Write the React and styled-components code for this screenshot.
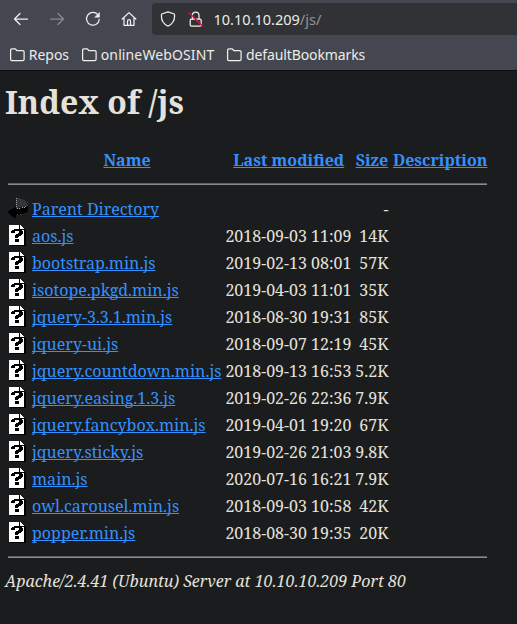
import React from "react";
import styled, { createGlobalStyle } from "styled-components";

const GlobalStyle = createGlobalStyle`
  body { margin: 0; background: #1b1c1d; overflow: hidden; }
`;

const Window = styled.div`
  height: 624px;
  box-sizing: border-box;
  overflow: hidden;
  background: #1b1c1d;
  color: #e5e2dc;
`;

const Chrome = styled.header`
  height: 70px;
  box-sizing: border-box;
  background: #44474f;
  box-shadow: 0 1px 0 #0f0f11;
  font-family: "Noto Sans", sans-serif;
  color: #ecece8;
`;

const Toolbar = styled.div`
  display: flex;
  height: 35px;
  padding-top: 3px;
  box-sizing: border-box;
`;

const NavButtons = styled.nav`
  display: flex;
  align-items: center;
  gap: 20px;
  width: 152px;
  padding-left: 13px;
  box-sizing: border-box;
  flex: none;
`;

const Icon = styled.svg`
  display: block;
  flex: none;
  width: 16px;
  height: 16px;
  fill: none;
  stroke: ${(p) => (p.$dim ? "#888a8e" : "#efefec")};
  stroke-width: 1.25;
  stroke-linecap: round;
  stroke-linejoin: round;
`;

const AddressBar = styled.div`
  display: flex;
  align-items: center;
  flex: 1;
  padding-left: 8px;
  border-radius: 4px 0 0 4px;
  background: #313236;
`;

const SecurityIcons = styled.div`
  display: flex;
  gap: 12px;
  margin-right: 9.5px;
`;

const Url = styled.span`
  font-size: 14.5px;
  line-height: 20px;
  white-space: nowrap;
`;

const UrlPath = styled.span`
  color: #929397;
`;

const Bookmarks = styled.div`
  display: flex;
  align-items: center;
  gap: 12px;
  height: 35px;
  padding: 4px 0 0 9px;
  box-sizing: border-box;
`;

const Bookmark = styled.span`
  display: flex;
  align-items: center;
  gap: 3.7px;
  font-size: 14px;
  line-height: 20px;
  letter-spacing: ${(p) => p.$tracking}px;
`;

const Listing = styled.main`
  padding: 10px 5px 0;
  font: 16px/22px "Noto Serif", serif;
`;

const Title = styled.h1`
  margin: 0 0 25px;
  font-size: 32px;
  line-height: 44px;
  font-weight: 700;
`;

const Table = styled.div`
  width: 479px;
  margin-left: 3px;
`;

const Row = styled.div`
  display: grid;
  grid-template-columns: 20px 190px 125.4px 33px 95px;
  column-gap: 4px;
  height: ${(p) => (p.$head ? 22 : 27)}px;
  font-weight: ${(p) => (p.$head ? 700 : 400)};
  white-space: nowrap;
`;

const Cell = styled.div`
  display: flex;
  justify-content: ${(p) => p.$align || "flex-start"};
`;

const Link = styled.span`
  color: #3391ff;
  text-decoration: underline;
  text-decoration-skip-ink: none;
`;

const Rule = styled.hr`
  height: 2px;
  margin: ${(p) => p.$margin};
  border: 0;
  box-sizing: border-box;
  border-top: 1px solid #5d5f61;
  background: #8a8a88;
`;

const FileGlyph = styled.svg`
  display: block;
  width: 20px;
  height: 22px;
  margin-top: -1px;
`;

const Footer = styled.address`
  font-style: italic;
`;

const BackIcon = () => (
  <Icon viewBox="0 0 16 16"><path d="M14.5 8H1.5M7 2.5 1.5 8 7 13.5" /></Icon>
);
const ForwardIcon = () => (
  <Icon viewBox="0 0 16 16" $dim><path d="M1.5 8h13M9 2.5 14.5 8 9 13.5" /></Icon>
);
const ReloadIcon = () => (
  <Icon viewBox="0 0 16 16">
    <path d="M12.8 3.6A6.4 6.4 0 1 0 14.3 8.5" />
    <path d="M14.4 1.8v4.4H10z" fill="#efefec" strokeWidth=".6" />
  </Icon>
);
const HomeIcon = () => (
  <Icon viewBox="0 0 16 16">
    <path d="M1.2 8 8 1.6 14.8 8M3 6.8v7.5h10V6.8M6.5 14V10.2a1.5 1.5 0 0 1 3 0V14" />
  </Icon>
);
const ShieldIcon = () => (
  <Icon viewBox="0 0 16 16">
    <path d="M8 .9 14.4 3c.8 5.5-1 9.7-6.4 12.2C2.600 12.700.8 8.500 1.600 3z" />
  </Icon>
);
const LockIcon = () => (
  <Icon viewBox="0 0 16 16">
    <rect x="2.200" y="8" width="11" height="7" rx="1.300" />
    <path d="M4.400 7.800V4.300a3.300 3.300 0 0 1 6.600 0v3.500" />
    <path d="M1.200 1.800 14.500 15" stroke="#e80b43" strokeWidth="1.400" />
  </Icon>
);
const FolderIcon = () => (
  <Icon viewBox="0 0 16 16">
    <path d="M1.600 3.100q0-1.300 1.300-1.300h3.400l1.500 1.700h6q1.300 0 1.300 1.200v7.500q0 1.300-1.300 1.300H2.900q-1.300 0-1.300-1.300z" />
  </Icon>
);

const UnknownFile = () => (
  <FileGlyph viewBox="0 0 20 22" shapeRendering="crispEdges">
    <path fill="#000" d="M2 2h11l5 5v15H2z" />
    <path fill="#fff" d="M1 1h10v5h5v15H1zM12 1h1v1h1v1h1v1h1v1h-4z" />
    <path
      fill="#000"
      d="M6 5h7v1h1v1h1v3h-1v1h-1v1h-2v1h-1v1H7v-3h1v-1h2V9h1V7H7v2H3V7h1V6h2zM7 15h4v3H7z"
    />
  </FileGlyph>
);

const ParentFolder = () => (
  <FileGlyph viewBox="0 0 20 22" shapeRendering="crispEdges">
    <path fill="#343536" d="M8 1h4v1h3v1h2v1h1v2h1v3h-3v1h-5v1H8z" />
    <path fill="#000" d="M0 14h1v-1h2v-1h2v-1h2v-1h1v2h5v-1h4V9h3v6h-2v1h-2v1h-3v1H8v3H6v-1H4v-1H3v-1H2v-1H1v-1H0z" />
    <path stroke="#9b9b9b" fill="none" strokeDasharray="1 1" d="M8.500 1v9M9 11.500h4M14 10.500h3M17 9.500h2" />
    <path stroke="#4c4c4c" fill="none" strokeDasharray="1 2" d="M19.500 5v5M9 17.500h5" />
  </FileGlyph>
);

const bookmarks = [
  { name: "Repos", tracking: 0 },
  { name: "onlineWebOSINT", tracking: 0.12 },
  { name: "defaultBookmarks", tracking: -0.12 },
];

const files = [
  ["aos.js", "2018-09-03 11:09", "14K"],
  ["bootstrap.min.js", "2019-02-13 08:01", "57K"],
  ["isotope.pkgd.min.js", "2019-04-03 11:01", "35K"],
  ["jquery-3.3.1.min.js", "2018-08-30 19:31", "85K"],
  ["jquery-ui.js", "2018-09-07 12:19", "45K"],
  ["jquery.countdown.min.js", "2018-09-13 16:53", "5.2K"],
  ["jquery.easing.1.3.js", "2019-02-26 22:36", "7.9K"],
  ["jquery.fancybox.min.js", "2019-04-01 19:20", "67K"],
  ["jquery.sticky.js", "2019-02-26 21:03", "9.8K"],
  ["main.js", "2020-07-16 16:21", "7.9K"],
  ["owl.carousel.min.js", "2018-09-03 10:58", "42K"],
  ["popper.min.js", "2018-08-30 19:35", "20K"],
];

const FileRow = ({ icon, name, date, size }) => (
  <Row>
    <Cell>{icon}</Cell>
    <Cell><Link>{name}</Link></Cell>
    <Cell $align="flex-end">{date}</Cell>
    <Cell $align="flex-end">{size}</Cell>
    <Cell />
  </Row>
);

export default function App() {
  return (
    <Window>
      <GlobalStyle />
      <Chrome>
        <Toolbar>
          <NavButtons>
            <BackIcon /><ForwardIcon /><ReloadIcon /><HomeIcon />
          </NavButtons>
          <AddressBar>
            <SecurityIcons><ShieldIcon /><LockIcon /></SecurityIcons>
            <Url>10.10.10.209<UrlPath>/js/</UrlPath></Url>
          </AddressBar>
        </Toolbar>
        <Bookmarks>
          {bookmarks.map(({ name, tracking }) => (
            <Bookmark key={name} $tracking={tracking}><FolderIcon />{name}</Bookmark>
          ))}
        </Bookmarks>
      </Chrome>
      <Listing>
        <Title>Index of /js</Title>
        <Table>
          <Row $head>
            <Cell />
            <Cell $align="center"><Link>Name</Link></Cell>
            <Cell $align="center"><Link>Last modified</Link></Cell>
            <Cell $align="center"><Link>Size</Link></Cell>
            <Cell $align="flex-end"><Link>Description</Link></Cell>
          </Row>
          <Rule $margin="12px 0 13px" />
          <FileRow icon={<ParentFolder />} name="Parent Directory" size="-" />
          {files.map(([name, date, size]) => (
            <FileRow key={name} icon={<UnknownFile />} name={name} date={date} size={size} />
          ))}
          <Rule $margin="7px 0 12px" />
        </Table>
        <Footer>Apache/2.4.41 (Ubuntu) Server at 10.10.10.209 Port 80</Footer>
      </Listing>
    </Window>
  );
}
